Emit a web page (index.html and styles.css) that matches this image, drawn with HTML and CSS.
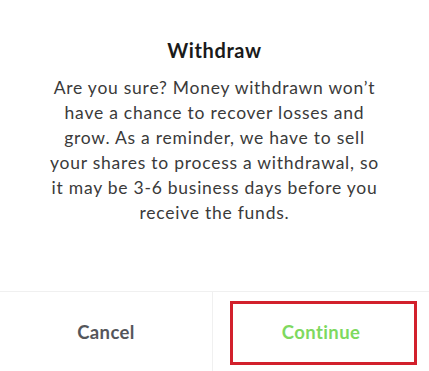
FILE: index.html
```html
<!DOCTYPE html>
<html>
<head>
<meta charset="utf-8">
<link rel="stylesheet" href="styles.css">
</head>
<body>
<div class="dialog">
  <div class="content">
    <h1 class="title">Withdraw</h1>
    <p class="message">Are you sure? Money withdrawn won’t<br>have a chance to recover losses and<br>grow. As a reminder, we have to sell<br>your shares to process a withdrawal, so<br>it may be 3-6 business days before you<br>receive the funds.</p>
  </div>
  <div class="actions">
    <button class="btn cancel">Cancel</button>
    <button class="btn continue">Continue</button>
    <div class="highlight"></div>
  </div>
</div>
</body>
</html>
```
FILE: styles.css
```css
html, body {
  margin: 0;
  padding: 0;
  background: #ffffff;
}
body {
  font-family: "Lato", "Open Sans", sans-serif;
  width: 429px;
  height: 371px;
  overflow: hidden;
}
.dialog {
  display: flex;
  flex-direction: column;
  height: 371px;
}
.content {
  flex: 1;
  display: flex;
  flex-direction: column;
  align-items: center;
  padding-top: 37px;
}
.title {
  margin: 0;
  font-size: 20px;
  font-weight: 700;
  color: #1a1a1a;
  line-height: 26px;
  letter-spacing: 0.6px;
}
.message {
  margin: 12px 0 0;
  font-size: 17.5px;
  line-height: 25px;
  color: #3a3a3a;
  text-align: center;
  letter-spacing: 0.75px;
}
.actions {
  position: relative;
  height: 79px;
  border-top: 1px solid #f0f0f0;
  display: grid;
  grid-template-columns: 213px 1fr;
}
.btn {
  border: none;
  background: transparent;
  font-family: inherit;
  font-size: 18.5px;
  font-weight: 700;
  letter-spacing: 0.4px;
  padding: 0;
}
.cancel {
  color: #55565b;
  border-right: 1px solid #f0f0f0;
}
.continue {
  color: #7ed95f;
}
.highlight {
  position: absolute;
  left: 230px;
  top: 9px;
  width: 181px;
  height: 58px;
  border: 3px solid #d2202c;
}
```
